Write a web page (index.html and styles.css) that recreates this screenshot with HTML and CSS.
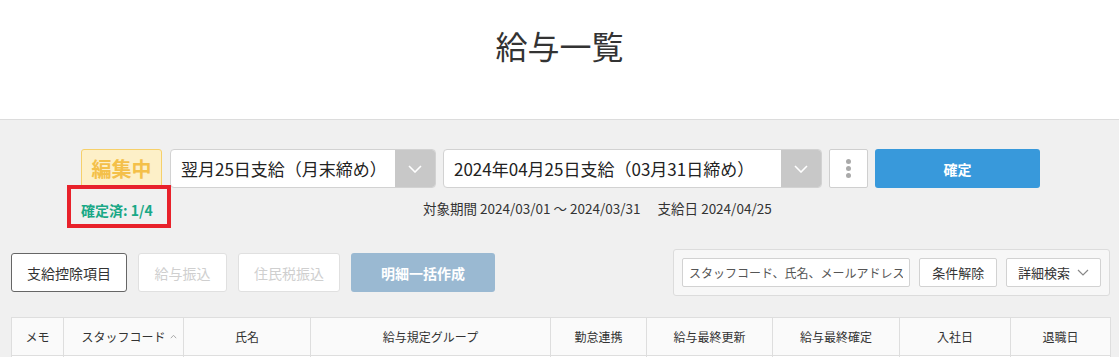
FILE: index.html
```html
<!DOCTYPE html>
<html lang="ja">
<head>
<meta charset="utf-8">
<title>給与一覧</title>
<link rel="stylesheet" href="styles.css">
</head>
<body>
<header class="page-header">
  <h1 class="page-title">給与一覧</h1>
</header>
<main class="page-main">
  <section class="period">
    <div class="controls">
      <div class="badge">編集中</div>
      <div class="select select-rule">
        <span class="select-text">翌月25日支給（月末締め）</span>
        <span class="select-arrow"><svg width="14" height="8" viewBox="0 0 14 8"><path d="M1 1l6 6 6-6" fill="none" stroke="#fff" stroke-width="1.6"/></svg></span>
      </div>
      <div class="select select-date">
        <span class="select-text">2024年04月25日支給（03月31日締め）</span>
        <span class="select-arrow"><svg width="14" height="8" viewBox="0 0 14 8"><path d="M1 1l6 6 6-6" fill="none" stroke="#fff" stroke-width="1.6"/></svg></span>
      </div>
      <button class="kebab" type="button"><span></span><span></span><span></span></button>
      <button class="confirm" type="button">確定</button>
    </div>
    <div class="info">
      <div class="status">確定済: 1/4<span class="annotation"></span></div>
      <div class="range">対象期間 2024/03/01 〜 2024/03/31<span class="range-gap"></span>支給日 2024/04/25</div>
    </div>
  </section>

  <section class="toolbar">
    <div class="actions">
      <button class="btn btn-outline" type="button">支給控除項目</button>
      <button class="btn btn-disabled btn-w1" type="button">給与振込</button>
      <button class="btn btn-disabled btn-w2" type="button">住民税振込</button>
      <button class="btn btn-primary-muted" type="button">明細一括作成</button>
    </div>
    <div class="search">
      <input class="search-input" type="text" placeholder="スタッフコード、氏名、メールアドレス">
      <button class="sbtn sbtn-clear" type="button">条件解除</button>
      <button class="sbtn sbtn-detail" type="button">詳細検索<svg width="12" height="7" viewBox="0 0 12 7"><path d="M1 1l5 5 5-5" fill="none" stroke="#888" stroke-width="1.2"/></svg></button>
    </div>
  </section>

  <table class="list">
    <thead>
      <tr>
        <th class="c-memo">メモ</th>
        <th class="c-code"><span class="sortable">スタッフコード<span class="sort"><svg width="7" height="5" viewBox="0 0 7 5"><path d="M0.8 4.2L3.5 1.3 6.2 4.2" fill="none" stroke="#aaa" stroke-width="1"/></svg></span></span></th>
        <th class="c-name">氏名</th>
        <th class="c-group">給与規定グループ</th>
        <th class="c-link">勤怠連携</th>
        <th class="c-upd">給与最終更新</th>
        <th class="c-fix">給与最終確定</th>
        <th class="c-in">入社日</th>
        <th class="c-out">退職日</th>
      </tr>
    </thead>
    <tbody>
      <tr><td></td><td></td><td></td><td></td><td></td><td></td><td></td><td></td><td></td></tr>
    </tbody>
  </table>
</main>
</body>
</html>
```

FILE: styles.css
```css
* { box-sizing: border-box; }
html, body { margin: 0; padding: 0; }
body {
  font-family: "Noto Sans CJK JP", "Noto Sans", sans-serif;
  color: #333;
  background: #f0f0f0;
}
button, input { font-family: inherit; }

.page-header {
  height: 120px;
  background: #fff;
  border-bottom: 1px solid #dcdcdc;
  padding-top: 27px;
}
.page-title {
  margin: 0;
  text-align: center;
  font-size: 32px;
  line-height: 36px;
  font-weight: 400;
  color: #333;
}

.page-main {
  padding: 29px 9px 0 11px;
}

.period {
  display: flex;
  flex-direction: column;
  align-items: center;
}
.controls {
  display: flex;
  height: 39px;
  gap: 7px;
}
.badge {
  width: 81px;
  margin-right: 1px;
  background: #fdf0c8;
  border: 1px solid #f6d06a;
  border-radius: 3px;
  color: #f4c04a;
  font-weight: 700;
  font-size: 20px;
  display: flex;
  align-items: center;
  justify-content: center;
}
.select {
  display: flex;
  background: #fff;
  border: 1px solid #d2d2d2;
  border-radius: 4px;
  overflow: hidden;
}
.select-rule { width: 266px; }
.select-date { width: 379px; }
.select-text {
  flex: 1;
  display: flex;
  align-items: center;
  padding-left: 10px;
  font-size: 17px;
  color: #222;
  white-space: nowrap;
}
.select-arrow {
  width: 40px;
  background: #c8c8c8;
  display: flex;
  align-items: center;
  justify-content: center;
}
.kebab {
  width: 39px;
  background: #fff;
  border: 1px solid #cfcfcf;
  border-radius: 2px;
  display: flex;
  flex-direction: column;
  align-items: center;
  justify-content: center;
  gap: 2px;
  padding: 0;
}
.kebab span {
  width: 5px;
  height: 5px;
  border-radius: 50%;
  background: #aaa;
}
.confirm {
  width: 165px;
  border: 0;
  border-radius: 3px;
  background: #3899db;
  color: #fff;
  font-weight: 700;
  font-size: 14px;
}

.info {
  width: 959px;
  display: flex;
  align-items: center;
  margin-top: 12px;
  height: 20px;
}
.status {
  position: relative;
  color: #19a886;
  font-weight: 700;
  font-size: 14px;
  line-height: 20px;
}
.annotation {
  position: absolute;
  left: -14px;
  top: -15px;
  width: 104px;
  height: 43px;
  border: 4px solid #e8212a;
}
.range {
  flex: 1;
  text-align: center;
  font-size: 13.5px;
  line-height: 16px;
  margin-top: -4px;
  padding-left: 2px;
  color: #333;
}
.range-gap { display: inline-block; width: 17px; }

.toolbar {
  display: flex;
  align-items: center;
  justify-content: space-between;
  margin-top: 29px;
}
.actions {
  display: flex;
  gap: 11px;
}
.btn {
  height: 39px;
  border-radius: 3px;
  font-size: 14px;
  background: #fff;
  padding: 0;
}
.btn-outline {
  width: 116px;
  border: 1px solid #666;
  color: #333;
}
.btn-disabled {
  border: 1px solid #e0e0e0;
  color: #cfcfcf;
}
.btn-w1 { width: 89px; }
.btn-w2 { width: 102px; }
.btn-primary-muted {
  width: 144px;
  border: 0;
  background: #9ab9d2;
  color: #fff;
  font-weight: 700;
}

.search {
  display: flex;
  align-items: center;
  gap: 9px;
  width: 437px;
  height: 47px;
  padding: 0 8px;
  background: #f7f7f7;
  border: 1px solid #dcdcdc;
  border-radius: 3px;
}
.search-input {
  width: 229px;
  height: 29px;
  border: 1px solid #d2d2d2;
  border-radius: 2px;
  background: #fff;
  padding: 0 6px;
  font-size: 12px;
}
.search-input::placeholder { color: #555; }
.sbtn {
  height: 29px;
  border: 1px solid #d2d2d2;
  border-radius: 2px;
  background: #fff;
  color: #333;
  font-size: 13px;
  padding: 0;
  display: flex;
  align-items: center;
  justify-content: center;
}
.sbtn-clear { width: 78px; }
.sbtn-detail { width: 95px; gap: 7px; }

.list {
  margin-top: 21px;
  width: 1099px;
  border-collapse: collapse;
  table-layout: fixed;
  background: #fff;
}
.list th {
  height: 38px;
  background: #fafafa;
  border: 1px solid #dedede;
  font-size: 12px;
  font-weight: 400;
  color: #333;
  padding: 0;
  white-space: nowrap;
}
.list td {
  height: 38px;
  border: 1px solid #dedede;
  background: #fff;
}
.sortable {
  position: relative;
}
.sort {
  position: absolute;
  left: 100%;
  top: 50%;
  margin-left: 4px;
  margin-top: -3px;
  line-height: 0;
}
.c-memo { width: 52px; }
.c-code { width: 120px; }
.c-name { width: 127px; }
.c-group { width: 240px; }
.c-link { width: 96px; }
.c-upd { width: 126px; }
.c-fix { width: 127px; }
.c-in { width: 111px; }
.c-out { width: 100px; }
```
